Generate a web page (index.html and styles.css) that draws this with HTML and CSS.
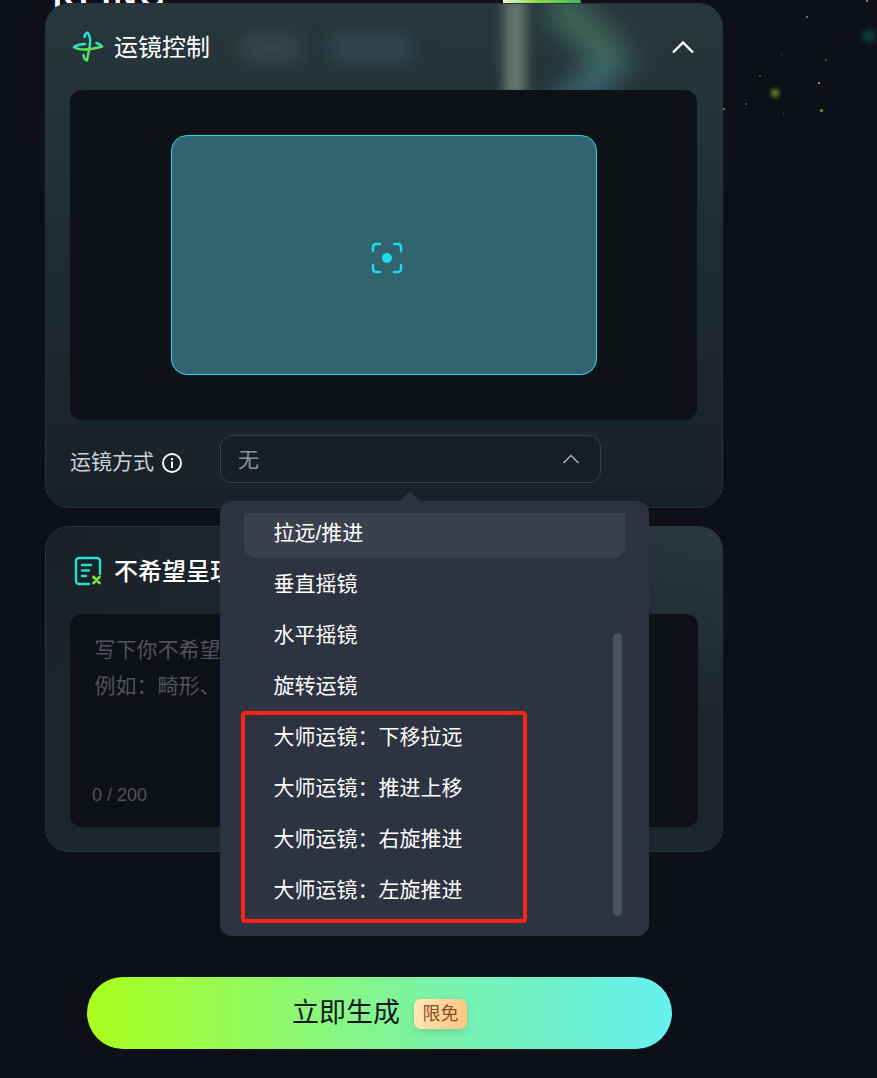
FILE: index.html
```html
<!DOCTYPE html>
<html lang="zh-CN">
<head>
  <meta charset="UTF-8">
  <meta name="viewport" content="width=device-width, initial-scale=1.0">
  <title>运镜控制</title>
  <link rel="stylesheet" href="styles.css">
</head>
<body>
  <div class="page">
    <div class="stars">
      <i class="star glow-teal"></i>
      <i class="star glow-green"></i>
      <i class="star s1"></i>
      <i class="star s2"></i>
      <i class="star s3"></i>
      <i class="star s4"></i>
      <i class="star s5"></i>
      <i class="star s6"></i>
      <i class="star s7"></i>
      <i class="star s8"></i>
      <i class="star s9"></i>
      <i class="star s10"></i>
    </div>
    <div class="banner-logo">KLING</div>
    <div class="banner-light"></div>

    <section class="card camera-card">
      <div class="card-blur">
        <span class="blur-title"></span>
        <span class="blur-title-b"></span>
        <span class="blur-beam"></span>
        <span class="blur-arc"></span>
      </div>
      <header class="card-head">
        <svg class="head-icon" width="32" height="32" viewBox="0 0 32 32" fill="none">
          <defs>
            <linearGradient id="camGrad" x1="0.1" y1="0" x2="0.5" y2="1">
              <stop offset="0" stop-color="#1fe3e8"/>
              <stop offset="0.6" stop-color="#2fe3b0"/>
              <stop offset="1" stop-color="#6fe040"/>
            </linearGradient>
          </defs>
          <path d="M12.500 6c0-2 1-3.500 3-4.500 2.500 3 3 7 2.500 11.500-.5 5-2 10-3 16.500-2-1-3.500-3-3.500-5.500" stroke="url(#camGrad)" stroke-width="2.400" stroke-linecap="round" stroke-linejoin="round"/>
          <path d="M2 16c5 3.500 14 3.500 28-.5-1.500-2-3.500-3-5.500-3.500M2 16c3-2 7-3 11-3" stroke="url(#camGrad)" stroke-width="2.600" stroke-linecap="round" stroke-linejoin="round"/>
        </svg>
        <h2 class="card-title">运镜控制</h2>
        <svg class="collapse" width="24" height="14" viewBox="0 0 24 14" fill="none">
          <path d="M2 12.500 12 2.500l10 10" stroke="#fff" stroke-width="2.400"/>
        </svg>
      </header>
      <div class="preview">
        <div class="frame">
          <svg width="32" height="32" viewBox="0 0 32 32" fill="none">
            <path d="M2 9V5a3 3 0 0 1 3-3h4M23 2h4a3 3 0 0 1 3 3v4M30 23v4a3 3 0 0 1-3 3h-4M9 30H5a3 3 0 0 1-3-3v-4" stroke="#1fdcec" stroke-width="2.400" stroke-linecap="round"/>
            <circle cx="16" cy="16" r="5" fill="#1fdcec"/>
          </svg>
        </div>
      </div>
      <div class="mode-row">
        <span class="mode-label">运镜方式</span>
        <svg class="info" width="22" height="22" viewBox="0 0 22 22" fill="none">
          <circle cx="11" cy="11" r="9" stroke="#fff" stroke-width="1.900"/>
          <rect x="10" y="9.500" width="2" height="6.500" fill="#fff"/>
          <rect x="10" y="6" width="2" height="2" fill="#fff"/>
        </svg>
        <div class="select">
          <span class="select-value">无</span>
          <svg width="18" height="10" viewBox="0 0 18 10" fill="none">
            <path d="M1.500 9 9 1.500 16.500 9" stroke="#a9adb3" stroke-width="1.500"/>
          </svg>
        </div>
      </div>
    </section>

    <section class="card negative-card">
      <header class="card-head">
        <svg class="head-icon" width="32" height="32" viewBox="0 0 32 32" fill="none">
          <path d="M17 29H7a3 3 0 0 1-3-3V6a3 3 0 0 1 3-3h18a3 3 0 0 1 3 3v13" stroke="#24e0c8" stroke-width="2.400" stroke-linecap="round"/>
          <path d="M10 10h9M10 15.500h7M10 21h4" stroke="#24e0c8" stroke-width="2.400" stroke-linecap="round"/>
          <path d="M21.500 22l6 6M27.500 22l-6 6" stroke="#7fe03c" stroke-width="2.800" stroke-linecap="round"/>
        </svg>
        <h2 class="card-title">不希望呈现的内容</h2>
      </header>
      <div class="negative-box">
        <p class="placeholder">写下你不希望呈现的内容<br>例如：畸形、</p>
        <span class="counter">0 / 200</span>
      </div>
    </section>

    <div class="generate-wrap">
      <button class="generate"><span class="generate-text">立即生成</span><span class="free-tag">限免</span></button>
    </div>

    <div class="dropdown">
      <div class="dropdown-arrow"></div>
      <ul class="options">
        <li class="option active">拉远/推进</li>
        <li class="option">垂直摇镜</li>
        <li class="option">水平摇镜</li>
        <li class="option">旋转运镜</li>
        <li class="option">大师运镜：下移拉远</li>
        <li class="option">大师运镜：推进上移</li>
        <li class="option">大师运镜：右旋推进</li>
        <li class="option">大师运镜：左旋推进</li>
      </ul>
      <div class="scrollbar"></div>
    </div>
    <div class="red-box"></div>
  </div>
</body>
</html>
```

FILE: styles.css
```css
* {
  margin: 0;
  padding: 0;
  box-sizing: border-box;
}

body {
  font-family: "Liberation Sans", "Noto Sans CJK SC", sans-serif;
  background-color: #0d1117;
  color: #fff;
}

.page {
  position: relative;
  width: 877px;
  height: 1078px;
  overflow: hidden;
  padding: 3px 154px 0 45px;
}

/* background specks on the right */
.stars {
  position: absolute;
  inset: 0;
}

.star {
  position: absolute;
  width: 2px;
  height: 2px;
  border-radius: 50%;
  background-color: #4fb0a8;
}

.glow-teal {
  left: 863px;
  top: 30px;
  width: 12px;
  height: 12px;
  background-color: #0d4a44;
  filter: blur(3px);
}

.glow-green {
  left: 771px;
  top: 89px;
  width: 8px;
  height: 8px;
  background-color: #6c8a2a;
  filter: blur(2px);
}

.s1 { left: 806px; top: 16px; }
.s2 { left: 818px; top: 82px; background-color: #7fd0d0; }
.s3 { left: 820px; top: 109px; background-color: #7c9a3a; width: 3px; height: 3px; }
.s4 { left: 745px; top: 103px; background-color: #3f6f88; }
.s5 { left: 866px; top: 0; background-color: #5fc08a; }
.s6 { left: 723px; top: 108px; background-color: #7c9a3a; }
.s7 { left: 783px; top: 113px; background-color: #4f7f88; width: 1px; height: 1px; }
.s8 { left: 759px; top: 75px; background-color: #6a5540; }
.s9 { left: 825px; top: 59px; background-color: #6a5a30; }
.s10 { left: 781px; top: 54px; background-color: #4f7f88; width: 1px; height: 1px; }

.banner-logo {
  position: absolute;
  left: 53px;
  top: -17px;
  font-size: 32px;
  font-weight: 700;
  letter-spacing: 3px;
  line-height: 26px;
}

.banner-light {
  position: absolute;
  left: 503px;
  top: -12px;
  width: 78px;
  height: 16px;
  border-radius: 0 40px 0 0;
  background: linear-gradient(90deg, #e8f5d0, #8fd845 45%, #3fb86a);
}

.card {
  position: relative;
  width: 678px;
  border: 1px solid #26343b;
  border-radius: 24px;
  overflow: hidden;
  padding: 0 24px;
}

.camera-card {
  height: 505px;
  background: linear-gradient(180deg, #28373e 0%, #1f2c33 45%, #182129 100%);
}

.negative-card {
  height: 326px;
  margin-top: 18px;
  background:
    linear-gradient(180deg, transparent 0, #1b262d 58%),
    linear-gradient(90deg, #1a1f26, #2a393f);
}

/* blurred banner showing through the panel */
.card-blur {
  position: absolute;
  inset: 0 0 auto 0;
  height: 86px;
  overflow: hidden;
}

.card-blur span {
  position: absolute;
  display: block;
}

.blur-title {
  left: 195px;
  top: 32px;
  width: 60px;
  height: 24px;
  background-color: #36474e;
  filter: blur(9px);
}

.blur-title-b {
  left: 285px;
  top: 32px;
  width: 80px;
  height: 24px;
  background-color: #334a53;
  filter: blur(9px);
}

.blur-beam {
  left: 458px;
  top: -6px;
  width: 22px;
  height: 100px;
  background-color: #66766c;
  filter: blur(6px);
}

.blur-arc {
  left: 469px;
  top: 6px;
  width: 100px;
  height: 100px;
  border-top: 30px solid #43705c;
  border-right: 30px solid #3b6a72;
  border-radius: 0 16px 0 0;
  transform: rotate(45deg);
  filter: blur(14px);
}

.card-head {
  position: relative;
  display: flex;
  align-items: center;
  height: 86px;
}

.negative-card .card-head {
  height: 87px;
}

.negative-card .card-title {
  font-weight: 500;
}

.head-icon {
  flex: none;
  margin: 0 10px 0 2px;
}

.card-title {
  margin-top: 2px;
  font-size: 24px;
  font-weight: 400;
  line-height: 30px;
}

.collapse {
  margin-left: auto;
  margin-right: 3px;
}

.preview {
  position: relative;
  display: flex;
  justify-content: center;
  align-items: center;
  height: 330px;
  margin-right: 1px;
  background-color: #0e1116;
  border-radius: 12px;
}

.frame {
  display: flex;
  justify-content: center;
  align-items: center;
  width: 426px;
  height: 240px;
  padding: 6px 0 0 6px;
  margin-left: 1px;
  background-color: #30656f;
  border: 1px solid #1fdcec;
  border-radius: 16px;
}

.mode-row {
  position: relative;
  display: flex;
  align-items: center;
  height: 48px;
  margin-top: 15px;
}

.mode-label {
  margin-top: 2px;
  font-size: 21px;
  color: #d0d3d6;
}

.info {
  margin: 8px 0 0 7px;
}

.select {
  display: flex;
  justify-content: space-between;
  align-items: center;
  width: 381px;
  height: 48px;
  margin-left: 37px;
  padding: 0 20px 0 17px;
  font-size: 21px;
  color: #8f9499;
  border: 1px solid #343f47;
  border-radius: 12px;
  background-color: #171f26;
}

.select-value {
  margin-bottom: 2px;
}

.negative-box {
  position: relative;
  height: 213px;
  background-color: #0e1116;
  border-radius: 12px;
  padding: 18px 25px;
}

.placeholder {
  font-size: 21px;
  line-height: 36px;
  margin-left: -0.500px;
  color: #50545e;
}

.counter {
  position: absolute;
  left: 22px;
  bottom: 21px;
  font-size: 18px;
  color: #50545e;
}

.generate-wrap {
  display: flex;
  margin-top: 125px;
  padding-left: 42px;
}

.generate {
  display: flex;
  justify-content: center;
  align-items: center;
  width: 585px;
  height: 72px;
  border: none;
  border-radius: 36px;
  font-family: inherit;
  font-size: 27px;
  color: #14181c;
  background: linear-gradient(90deg, #aaff1c 0%, #7af3ab 60%, #66f0f0 100%);
}

.generate-text {
  margin-bottom: 6px;
}

.free-tag {
  display: block;
  margin: 2px 0 0 14px;
  padding: 0 8.500px;
  height: 30px;
  line-height: 30px;
  font-size: 18px;
  color: #8a5020;
  border-radius: 7px;
  background: linear-gradient(100deg, #ffe9b8, #ffc47e);
  box-shadow: 0 3px 8px rgba(60, 120, 90, 0.25);
}

/* select popup, sits over the cards */
.dropdown {
  position: absolute;
  left: 220px;
  top: 501px;
  width: 429px;
  height: 435px;
  padding: 12px 24px;
  background-color: #2d3340;
  border-radius: 12px;
}

.dropdown-arrow {
  position: absolute;
  left: 179px;
  top: -9px;
  width: 0;
  height: 0;
  border-left: 11px solid transparent;
  border-right: 11px solid transparent;
  border-bottom: 9px solid #2d3340;
}

.options {
  list-style: none;
  width: 381px;
}

.option {
  height: 51px;
  line-height: 42px;
  padding-left: 29.500px;
  font-size: 21px;
  color: #fff;
}

.option.active {
  height: 45px;
  margin-bottom: 5px;
  line-height: 40px;
  background-color: #3b404d;
  border-radius: 0 0 12px 12px;
}

.scrollbar {
  position: absolute;
  right: 27px;
  top: 132px;
  width: 9px;
  height: 283px;
  border-radius: 5px;
  background-color: #4c515f;
}

/* annotation drawn on the screenshot */
.red-box {
  position: absolute;
  left: 241px;
  top: 711px;
  width: 286px;
  height: 212px;
  border: 4px solid #ff2317;
  border-radius: 4px;
}
```
